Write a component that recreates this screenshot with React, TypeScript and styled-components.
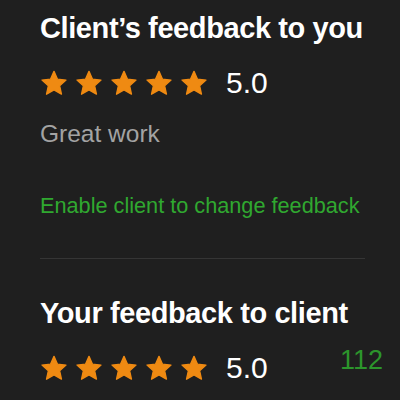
import React from 'react';
import styled, { createGlobalStyle } from 'styled-components';

const GlobalStyle = createGlobalStyle`
  html, body {
    margin: 0;
    padding: 0;
    background: #1f1f1f;
  }
  body {
    font-family: 'Liberation Sans', Arial, sans-serif;
  }
`;

const Page = styled.div`
  width: 400px;
  height: 400px;
  overflow: hidden;
  box-sizing: border-box;
  padding: 11px 35px 0 40px;
  background: #1f1f1f;
`;

const Title = styled.h2`
  margin: 0;
  font-size: 29px;
  font-weight: 700;
  color: #ffffff;
  line-height: 34px;
  letter-spacing: -0.4px;
`;

const RatingRow = styled.div`
  display: flex;
  align-items: center;
  margin-top: 23px;
  height: 30px;
`;

const Stars = styled.div`
  display: flex;
  gap: 7px;
`;

const Score = styled.span`
  margin-left: 18px;
  font-size: 30px;
  color: #ffffff;
  line-height: 30px;
`;

const Counter = styled.span`
  margin-left: auto;
  margin-right: -18px;
  align-self: flex-start;
  margin-top: -8px;
  font-size: 27px;
  font-weight: 300;
  color: #2c952c;
`;

const Comment = styled.p`
  margin: 21px 0 0;
  font-size: 24.5px;
  line-height: 30px;
  color: #a3a3a3;
`;

const ActionLink = styled.a`
  display: block;
  margin-top: 44px;
  font-size: 21.7px;
  line-height: 26px;
  color: #30a830;
  text-decoration: none;
`;

const Divider = styled.hr`
  margin: 39px 0 0;
  border: none;
  height: 1px;
  background: #353535;
`;

const SecondTitle = styled(Title)`
  margin-top: 37px;
`;

const Star = () => (
  <svg width="28" height="26" viewBox="0 0 24 23">
    <path
      d="M12 1.2l3.1 6.9 7.5.8-5.6 5.1 1.6 7.4L12 17.6 5.4 21.4 7 14l-5.6-5.1 7.5-.8z"
      fill="#ef8a12"
      stroke="#ef8a12"
      strokeWidth="1.2"
      strokeLinejoin="round"
    />
  </svg>
);

const StarRating = ({ value, count }: { value: number; count?: number }) => (
  <RatingRow>
    <Stars>
      {[0, 1, 2, 3, 4].map(i => <Star key={i}/>)}
    </Stars>
    <Score>{value.toFixed(1)}</Score>
    {count !== undefined && <Counter>{count}</Counter>}
  </RatingRow>
);

export default function App() {
  return (
    <Page>
      <GlobalStyle/>
      <Title>Client’s feedback to you</Title>
      <StarRating value={5}/>
      <Comment>Great work</Comment>
      <ActionLink href="#">Enable client to change feedback</ActionLink>
      <Divider/>
      <SecondTitle>Your feedback to client</SecondTitle>
      <StarRating value={5} count={112}/>
    </Page>
  );
}
